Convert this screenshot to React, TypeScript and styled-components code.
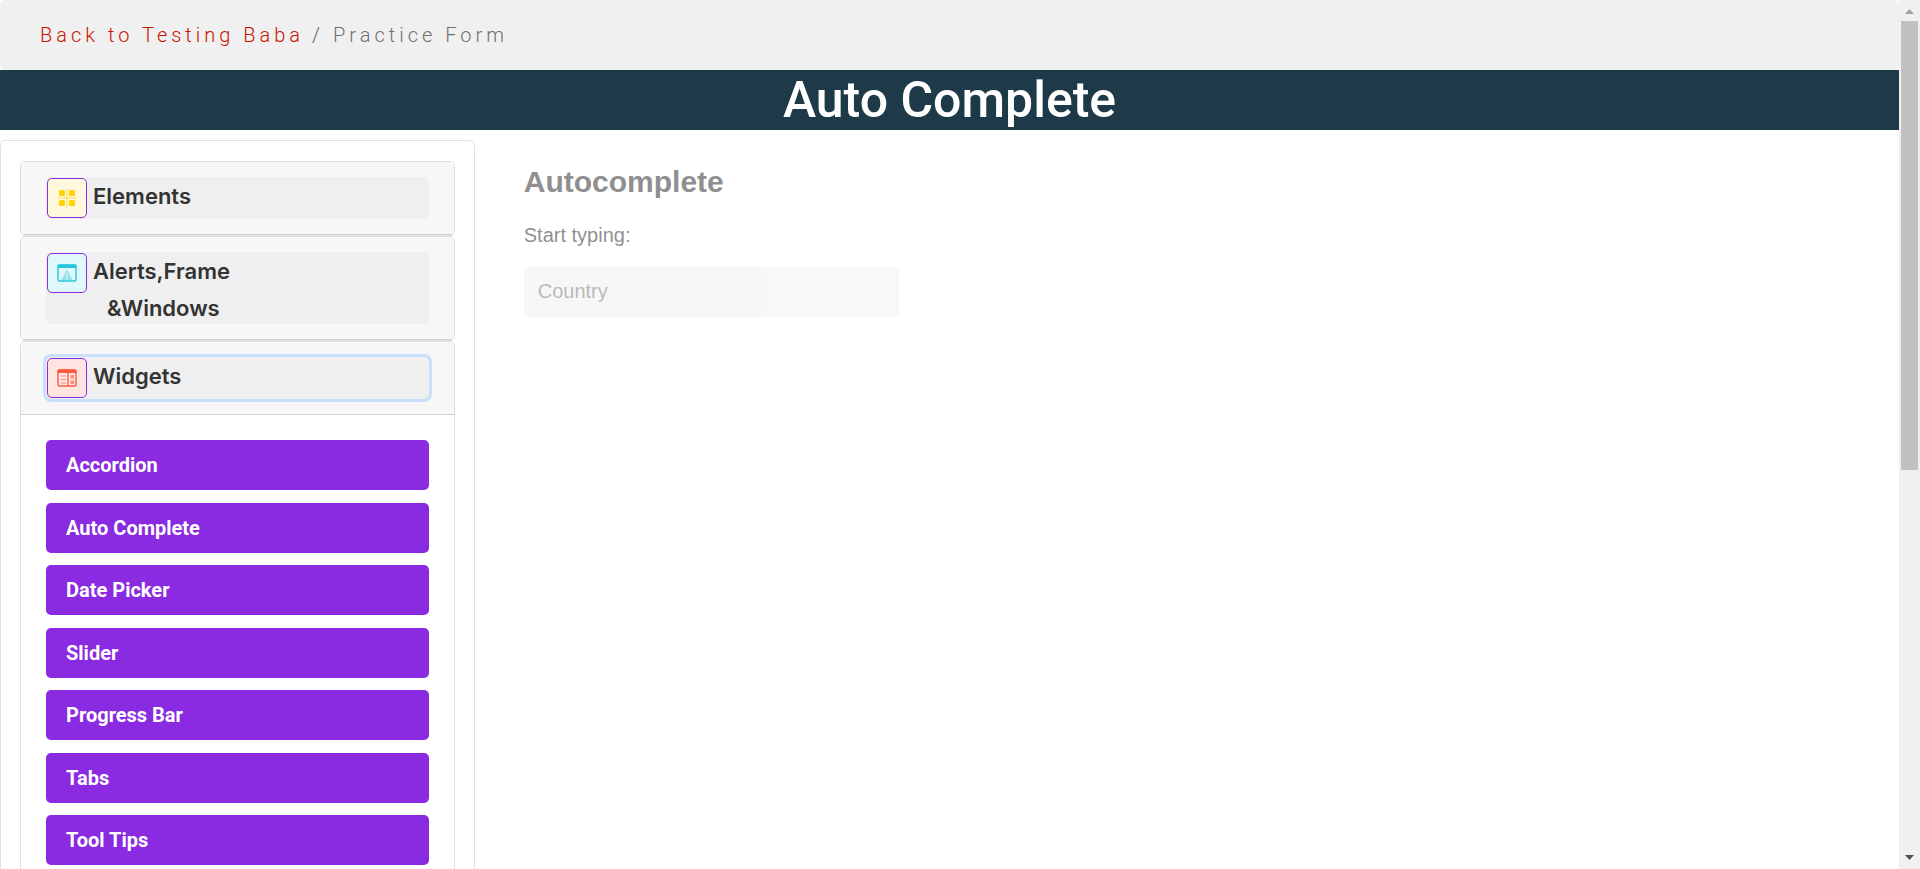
import React from "react";
import styled, { createGlobalStyle } from "styled-components";

const GlobalStyle = createGlobalStyle`
  * { box-sizing: border-box; }
  body {
    margin: 0;
    background: #fff;
    color: #212121;
    font-family: Roboto, "Liberation Sans", sans-serif;
    font-size: 20px;
    line-height: 30px;
  }
`;

const Shell = styled.div`
  display: flex;
  height: 100vh;
  overflow: hidden;
`;

const Page = styled.div`
  flex: 1;
  min-width: 0;
  overflow: hidden;
`;

const Breadcrumb = styled.nav`
  padding: 20px 40px;
  border-radius: 5px;
  background: #f0f0f0;
  color: #707070;
  font-weight: 300;
  letter-spacing: 4px;
`;

const BackLink = styled.a`
  color: #c81400;
  text-decoration: none;
`;

const Slash = styled.span`
  color: #5c656d;
  padding: 0 9px 0 8px;
`;

const Title = styled.h1`
  margin: 0 0 10px;
  background: #1e3948;
  color: #fff;
  font-size: 50px;
  font-weight: 500;
  line-height: 60px;
  text-align: center;
`;

const Columns = styled.div`
  display: flex;
  align-items: flex-start;
`;

const Sidebar = styled.aside`
  flex: 0 0 25%;
  padding: 20px 19px;
  border: 1px solid #dee2e6;
  border-radius: 5px;
`;

const Card = styled.section`
  border: 1px solid #dfdfdf;
  border-radius: 5px;
  background: #fff;
  overflow: hidden;
`;

const CardHeader = styled.h2`
  margin: 0;
  padding: 15px 25px;
  border-bottom: 1px solid #d0d0d0;
  background: #f7f7f7;
`;

const Toggle = styled.button<{ $focused?: boolean }>`
  display: flex;
  align-items: flex-start;
  gap: 6px;
  width: 100%;
  padding: 0 1px;
  border: 0;
  border-radius: 5px;
  background: #efefef;
  color: #333;
  font: 600 22px/38px Inter, "Open Sans", sans-serif;
  text-align: left;
  outline: none;
  box-shadow: ${(p) => (p.$focused ? "0 0 0 3px #c8e0fb" : "none")};
`;

const IconTile = styled.span<{ $tint: string }>`
  display: flex;
  flex: none;
  align-items: center;
  justify-content: center;
  width: 40px;
  height: 40px;
  margin: 1px 0;
  border: 1px solid #8a2be2;
  border-radius: 5px;
  background: ${(p) => p.$tint};
`;

const SecondLine = styled.span`
  display: block;
  padding: 2px 0 0 14px;
  line-height: 32px;
`;

const Menu = styled.ul`
  margin: 0;
  padding: 25px 25px 12px;
  list-style: none;
`;

const MenuItem = styled.li`
  margin-bottom: 12px;
  &:nth-child(odd) { margin-bottom: 13px; }
`;

const MenuLink = styled.a`
  display: block;
  padding: 10px 20px;
  border-radius: 5px;
  background: #8a2be2;
  color: #fff;
  font-weight: 700;
  text-decoration: none;
`;

const Content = styled.main`
  flex: 1;
  padding: 20px 49px;
  font-family: "Liberation Sans", Arial, sans-serif;
  opacity: 0.5;
`;

const Heading = styled.h2`
  margin: 4px 0 20px;
  font-size: 30px;
  font-weight: 700;
  line-height: 36px;
`;

const Label = styled.label`
  display: block;
  margin-bottom: 17px;
`;

const CountryInput = styled.input`
  display: block;
  width: 375px;
  max-width: 100%;
  padding: 11px 13px 13px;
  border: 1px solid transparent;
  background: #f1f1f1;
  font: 20px/24px "Liberation Sans", Arial, sans-serif;
  &::placeholder { color: #757575; opacity: 1; }
`;

const ScrollTrack = styled.div`
  display: flex;
  flex: none;
  flex-direction: column;
  width: 21px;
  padding: 0 2px;
  background: #f0f0f0;
`;

const ScrollArrow = styled.svg`
  display: block;
  flex: none;
  width: 16px;
  height: 21px;
`;

const ScrollLane = styled.div`
  flex: 1;
`;

const ScrollThumb = styled.div`
  height: calc(54% + 2px);
  background: #c1c1c1;
`;

const ElementsIcon = () => (
  <svg width="20" height="20" viewBox="0 0 20 20" aria-hidden="true">
    <path d="M10 .5v19M.5 10h19" stroke="#ffe57a" strokeWidth="1.6" />
    <g fill="#ffd200">
      <rect x="2" y="2" width="6" height="6" rx="1.5" />
      <rect x="12" y="2" width="6" height="6" rx="1.5" />
      <rect x="2" y="12" width="6" height="6" rx="1.5" />
      <rect x="12" y="12" width="6" height="6" rx="1.5" />
    </g>
  </svg>
);

const AlertsIcon = () => (
  <svg width="20" height="20" viewBox="0 0 20 20" aria-hidden="true">
    <rect x="1" y="2" width="18" height="16" rx="1.5" fill="none" stroke="#26c6da" strokeWidth="1.4" />
    <path d="M.5 5V3q0-1.500 1.500-1.500h16q1.500 0 1.500 1.500v2z" fill="#26c6da" />
    <path d="M10 6.500 15.800 17H4.200z" fill="#93e2ec" />
    <path d="M10 10v3.200M10 14.200v1.400" stroke="#e0f7fa" strokeWidth="1.400" />
  </svg>
);

const WidgetsIcon = () => (
  <svg width="20" height="20" viewBox="0 0 20 20" aria-hidden="true">
    <rect x="1" y="2" width="18" height="16" rx="1.5" fill="none" stroke="#ff5a3c" strokeWidth="1.4" />
    <path d="M.5 5V3q0-1.500 1.500-1.500h16q1.500 0 1.500 1.500v2z" fill="#ff5a3c" />
    <path d="M11 5v13" stroke="#ff5a3c" strokeWidth="1.3" />
    <path d="M4 8h5M4 11.500h5M4 15h5" stroke="#ff8a75" strokeWidth="1.2" />
    <path d="M13.500 7h3.500v3.500h-3.500zM13.500 12.500h3.500V16h-3.500z" fill="#ff8a75" />
  </svg>
);

const widgets = ["Accordion", "Auto Complete", "Date Picker", "Slider", "Progress Bar", "Tabs", "Tool Tips"];

export default function App() {
  return (
    <Shell>
      <GlobalStyle />
      <Page>
        <Breadcrumb aria-label="Breadcrumb">
          <BackLink href="#home">Back to Testing Baba</BackLink>
          <Slash>/</Slash>
          <span>Practice Form</span>
        </Breadcrumb>
        <Title>Auto Complete</Title>
        <Columns>
          <Sidebar>
            <Card>
              <CardHeader>
                <Toggle type="button">
                  <IconTile $tint="#fff8dc"><ElementsIcon /></IconTile>
                  <span>Elements</span>
                </Toggle>
              </CardHeader>
            </Card>
            <Card>
              <CardHeader>
                <Toggle type="button">
                  <IconTile $tint="#e0f7fb"><AlertsIcon /></IconTile>
                  <span>
                    Alerts,Frame
                    <SecondLine>&amp;Windows</SecondLine>
                  </span>
                </Toggle>
              </CardHeader>
            </Card>
            <Card>
              <CardHeader>
                <Toggle type="button" aria-expanded="true" $focused>
                  <IconTile $tint="#ffe4e1"><WidgetsIcon /></IconTile>
                  <span>Widgets</span>
                </Toggle>
              </CardHeader>
              <Menu>
                {widgets.map((name) => (
                  <MenuItem key={name}>
                    <MenuLink href="#widgets">{name}</MenuLink>
                  </MenuItem>
                ))}
              </Menu>
            </Card>
          </Sidebar>
          <Content>
            <Heading>Autocomplete</Heading>
            <Label htmlFor="country">Start typing:</Label>
            <CountryInput id="country" type="text" placeholder="Country" />
          </Content>
        </Columns>
      </Page>
      <ScrollTrack aria-hidden="true">
        <ScrollArrow viewBox="0 0 16 21">
          <path d="M4 14h9L8.500 9z" fill="#a3a3a3" />
        </ScrollArrow>
        <ScrollLane>
          <ScrollThumb />
        </ScrollLane>
        <ScrollArrow viewBox="0 0 16 21">
          <path d="M4 7h9l-4.500 5z" fill="#505050" />
        </ScrollArrow>
      </ScrollTrack>
    </Shell>
  );
}
